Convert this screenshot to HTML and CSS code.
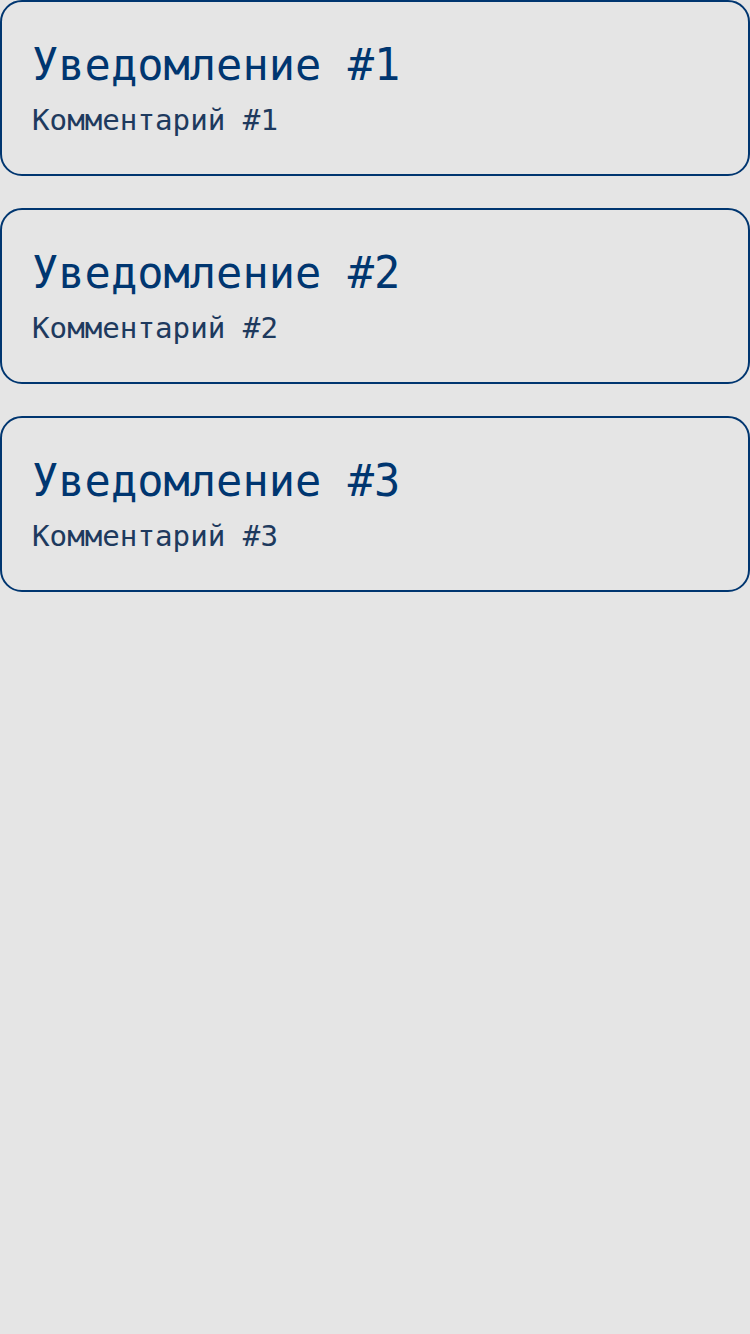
FILE: index.html
```html
<!DOCTYPE html>
<html lang="ru">
<head>
<meta charset="utf-8">
<title>Уведомления</title>
<link rel="stylesheet" href="styles.css">
</head>
<body>
<main class="list">
  <section class="card">
    <h2 class="title">Уведомление #1</h2>
    <p class="comment">Комментарий #1</p>
  </section>
  <section class="card">
    <h2 class="title">Уведомление #2</h2>
    <p class="comment">Комментарий #2</p>
  </section>
  <section class="card">
    <h2 class="title">Уведомление #3</h2>
    <p class="comment">Комментарий #3</p>
  </section>
</main>
</body>
</html>
```
FILE: styles.css
```css
html, body {
  margin: 0;
  padding: 0;
  background: #e5e5e5;
}
body {
  font-family: "DejaVu Sans Mono", "Liberation Mono", monospace;
  width: 750px;
  min-height: 1334px;
}
.list {
  display: flex;
  flex-direction: column;
  gap: 32px;
}
.card {
  border: 2px solid #003670;
  border-radius: 22px;
  padding: 37px 30px 37px 30px;
  display: flex;
  flex-direction: column;
  gap: 12px;
}
.title {
  margin: 0;
  font-weight: normal;
  font-size: 43.7px;
  line-height: 52px;
  color: #003670;
}
.comment {
  margin: 0;
  font-size: 29.2px;
  line-height: 34px;
  color: #1e3a5e;
}
```
